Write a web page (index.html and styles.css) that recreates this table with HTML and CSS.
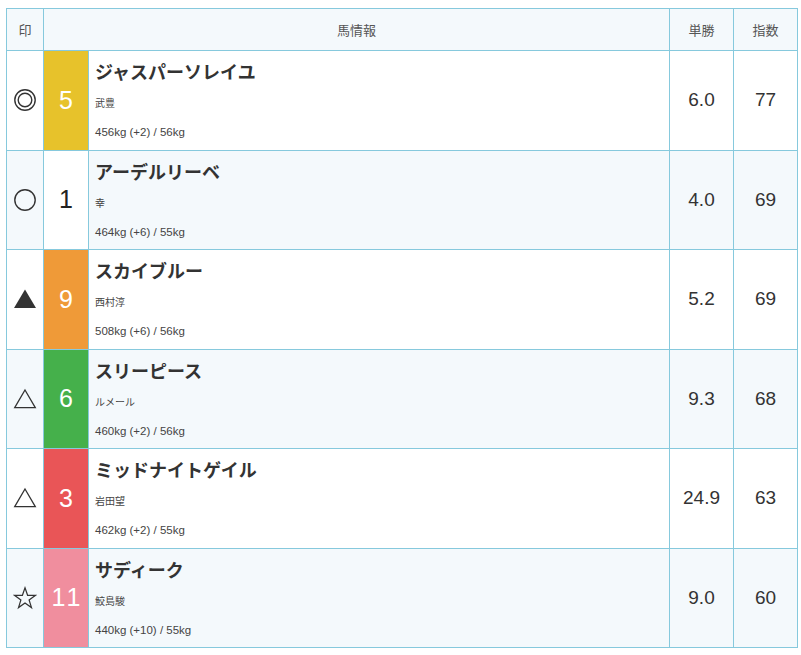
FILE: index.html
```html
<!DOCTYPE html>
<html lang="ja">
<head>
<meta charset="utf-8">
<link rel="stylesheet" href="styles.css">
</head>
<body>
<table class="race">
  <colgroup>
    <col class="c-mark"><col class="c-waku"><col class="c-info"><col class="c-odds"><col class="c-idx">
  </colgroup>
  <thead>
    <tr>
      <th>印</th>
      <th colspan="2">馬情報</th>
      <th>単勝</th>
      <th>指数</th>
    </tr>
  </thead>
  <tbody>
    <tr>
      <td class="mark"><svg width="24" height="24" viewBox="0 0 24 24"><circle cx="12" cy="12" r="10.2" fill="none" stroke="#333" stroke-width="1.4"/><circle cx="12" cy="12" r="6.8" fill="none" stroke="#333" stroke-width="1.4"/></svg></td>
      <td class="waku w-yellow">5</td>
      <td class="info"><div class="name">ジャスパーソレイユ</div><div class="jockey">武豊</div><div class="weight">456kg (+2) / 56kg</div></td>
      <td class="num">6.0</td>
      <td class="num">77</td>
    </tr>
    <tr class="alt">
      <td class="mark"><svg width="24" height="24" viewBox="0 0 24 24"><circle cx="12" cy="12" r="10.2" fill="none" stroke="#333" stroke-width="1.4"/></svg></td>
      <td class="waku w-white">1</td>
      <td class="info"><div class="name">アーデルリーベ</div><div class="jockey">幸</div><div class="weight">464kg (+6) / 55kg</div></td>
      <td class="num">4.0</td>
      <td class="num">69</td>
    </tr>
    <tr>
      <td class="mark"><svg width="24" height="24" viewBox="0 0 24 24"><polygon points="12,2.5 23,21 1,21" fill="#333"/></svg></td>
      <td class="waku w-orange">9</td>
      <td class="info"><div class="name">スカイブルー</div><div class="jockey">西村淳</div><div class="weight">508kg (+6) / 56kg</div></td>
      <td class="num">5.2</td>
      <td class="num">69</td>
    </tr>
    <tr class="alt">
      <td class="mark"><svg width="24" height="24" viewBox="0 0 24 24"><polygon points="12,3 22.3,20.6 1.7,20.6" fill="none" stroke="#333" stroke-width="1.3" stroke-linejoin="miter"/></svg></td>
      <td class="waku w-green">6</td>
      <td class="info"><div class="name">スリーピース</div><div class="jockey">ルメール</div><div class="weight">460kg (+2) / 56kg</div></td>
      <td class="num">9.3</td>
      <td class="num">68</td>
    </tr>
    <tr>
      <td class="mark"><svg width="24" height="24" viewBox="0 0 24 24"><polygon points="12,3 22.3,20.6 1.7,20.6" fill="none" stroke="#333" stroke-width="1.3" stroke-linejoin="miter"/></svg></td>
      <td class="waku w-red">3</td>
      <td class="info"><div class="name">ミッドナイトゲイル</div><div class="jockey">岩田望</div><div class="weight">462kg (+2) / 55kg</div></td>
      <td class="num">24.9</td>
      <td class="num">63</td>
    </tr>
    <tr class="alt">
      <td class="mark"><svg width="24" height="24" viewBox="0 0 24 24"><polygon points="12,1.8 14.6,9.3 22.5,9.3 16.1,14 18.5,21.6 12,16.9 5.5,21.6 7.9,14 1.5,9.3 9.4,9.3" fill="none" stroke="#333" stroke-width="1.2" stroke-linejoin="miter"/></svg></td>
      <td class="waku w-pink">11</td>
      <td class="info"><div class="name">サディーク</div><div class="jockey">鮫島駿</div><div class="weight">440kg (+10) / 55kg</div></td>
      <td class="num">9.0</td>
      <td class="num">60</td>
    </tr>
  </tbody>
</table>
</body>
</html>
```

FILE: styles.css
```css
html, body {
  margin: 0;
  padding: 0;
  background: #fff;
}
body {
  padding: 8px 4px 0 6px;
  font-family: "Liberation Sans", "Noto Sans CJK JP", sans-serif;
  color: #333;
}
.race {
  width: 791px;
  border-collapse: collapse;
  table-layout: fixed;
}
.c-mark { width: 37px; }
.c-waku { width: 45px; }
.c-info { width: 581px; }
.c-odds { width: 64px; }
.c-idx { width: 64px; }

.race th,
.race td {
  border: 1px solid #86c9dd;
  padding: 0;
}
.race thead th {
  height: 41px;
  background: #f4f9fc;
  font-weight: normal;
  font-size: 13px;
  color: #555;
  font-family: "Noto Sans CJK JP", sans-serif;
  text-align: center;
  vertical-align: middle;
}
.race tbody td {
  height: 98.5px;
  vertical-align: middle;
}
.race tbody tr.alt td {
  background: #f4f9fc;
}
.mark {
  text-align: center;
  line-height: 0;
}
.mark svg {
  display: inline-block;
}
.waku {
  text-align: center;
  font-size: 25px;
  color: #fff;
  font-family: "Liberation Sans", sans-serif;
}
.race tbody tr td.w-yellow { background: #e7c22b; }
.race tbody tr td.w-white { background: #fff; color: #222; }
.race tbody tr td.w-orange { background: #ef9a38; }
.race tbody tr td.w-green { background: #45b04b; }
.race tbody tr td.w-red { background: #e95557; }
.race tbody tr td.w-pink { background: #f08e9e; letter-spacing: 3px; text-indent: 3px; }

.race tbody td.info {
  vertical-align: top;
  padding: 0 0 0 6px;
}
.name {
  margin-top: 7px;
  font-family: "Noto Sans CJK JP", sans-serif;
  font-weight: bold;
  font-size: 18px;
  line-height: 26px;
  color: #333;
}
.jockey {
  font-family: "Noto Sans CJK JP", sans-serif;
  font-size: 10px;
  line-height: 30px;
  margin-top: 4px;
  color: #444;
}
.weight {
  font-family: "Liberation Sans", "Noto Sans CJK JP", sans-serif;
  font-size: 11.5px;
  line-height: 29px;
  color: #444;
}
.num {
  text-align: center;
  font-size: 19px;
  color: #333;
}
```
